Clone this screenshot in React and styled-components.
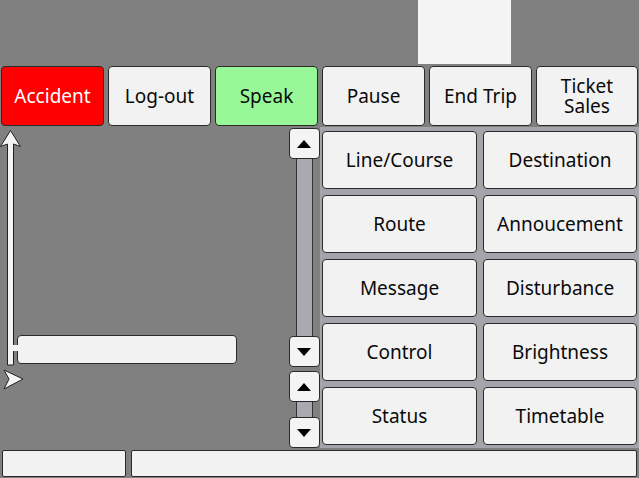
import React from "react";
import styled, { createGlobalStyle } from "styled-components";

const Global = createGlobalStyle`
  html, body { margin: 0; padding: 0; background: #808080; }
  body { font-family: "Noto Sans", "Open Sans", sans-serif; }
  * { box-sizing: border-box; }
`;

const Screen = styled.div`
  width: 639px;
  height: 478px;
  background: #808080;
  display: flex;
  flex-direction: column;
  overflow: hidden;
`;

const TopStrip = styled.div`
  height: 66px;
  display: flex;
  padding-left: 418px;
`;

const Indicator = styled.div`
  width: 93px;
  height: 64px;
  background: #f4f4f4;
`;

const Toolbar = styled.div`
  height: 60px;
  display: flex;
  gap: 4px;
  padding-left: 1px;
`;

const Btn = styled.button`
  flex: 0 0 ${(p) => p.$w || 103}px;
  height: 100%;
  border: 1px solid #2a2a2a;
  border-radius: 4px;
  background: ${(p) => p.$bg || "#f2f2f2"};
  color: ${(p) => p.$fg || "#0a0a0a"};
  font-family: "Noto Sans", sans-serif;
  font-size: 19px;
  line-height: 20px;
  padding: 0;
  display: flex;
  align-items: center;
  justify-content: center;
  text-align: center;
  white-space: pre-line;
`;

const Main = styled.div`
  flex: 1;
  display: flex;
  margin-top: 1px;
  min-height: 0;
`;

const Canvas = styled.div`
  position: relative;
  width: 288px;
  display: flex;
  flex-direction: column;
  padding: 208px 0 0 17px;
`;

const AxisArt = styled.svg`
  position: absolute;
  left: 0;
  top: 0;
`;

const Field = styled.div`
  width: 220px;
  height: 29px;
  background: #f2f2f2;
  border: 1px solid #2a2a2a;
  border-radius: 4px;
`;

const ScrollCol = styled.div`
  width: 32px;
  display: flex;
  flex-direction: column;
  align-items: center;
  padding-top: 1px;
  gap: 4px;
`;

const Scroller = styled.div`
  display: flex;
  flex-direction: column;
  align-items: center;
  height: ${(p) => p.$h}px;
`;

const Track = styled.div`
  flex: 1;
  width: 17px;
  background: #a9a9b0;
  border-left: 1px solid #333;
  border-right: 1px solid #333;
`;

const Arrow = styled.button`
  width: 31px;
  height: 31px;
  flex: 0 0 31px;
  padding: 0;
  background: #f4f4f4;
  border: 1px solid #2a2a2a;
  border-radius: 4px;
  display: flex;
  align-items: center;
  justify-content: center;
`;

const Grid = styled.div`
  flex: 1;
  background: #a4a4ab;
  display: grid;
  grid-template-columns: 155px 154px;
  grid-auto-rows: 58px;
  column-gap: 6px;
  row-gap: 6px;
  padding: 4px 2px 3px 2px;
`;

const GridBtn = styled(Btn)`
  height: 58px;
`;

const Bottom = styled.div`
  height: 30px;
  display: flex;
  gap: 5px;
  padding: 2px 2px 1px 2px;
`;

const Cell = styled.div`
  width: ${(p) => p.$w}px;
  height: 27px;
  background: #f2f2f2;
  border: 1px solid #2a2a2a;
  border-radius: 2px;
`;

const Tri = ({ up }) => (
  <svg width="16" height="10" viewBox="0 0 16 10">
    <polygon points={up ? "1,9 8,1 15,9" : "1,1 8,9 15,1"} fill="#000" />
  </svg>
);

const Axes = () => (
  <AxisArt width="40" height="280" viewBox="0 0 40 280">
    <path
      d="M7.5 17 L7.5 238 L13.5 238 L13.5 17 L20.5 19.5 L10.5 3.5 L0.5 19.5 Z"
      fill="#f4f4f4"
      stroke="#222"
      strokeWidth="1"
      strokeLinejoin="round"
    />
    <rect x="13" y="218" width="5" height="6" fill="#f4f4f4" />
    <path
      d="M4 243 L23 252 L4 262 L9 252 Z"
      fill="#f4f4f4"
      stroke="#222"
      strokeWidth="1"
      strokeLinejoin="round"
    />
  </AxisArt>
);

const topButtons = [
  { t: "Accident", bg: "#ff0000", fg: "#ffffff" },
  { t: "Log-out" },
  { t: "Speak", bg: "#98f898" },
  { t: "Pause" },
  { t: "End Trip" },
  { t: "Ticket\nSales", w: 102 },
];

const gridButtons = [
  "Line/Course",
  "Destination",
  "Route",
  "Annoucement",
  "Message",
  "Disturbance",
  "Control",
  "Brightness",
  "Status",
  "Timetable",
];

export default function App() {
  return (
    <>
      <Global />
      <Screen>
        <TopStrip>
          <Indicator />
        </TopStrip>
        <Toolbar>
          {topButtons.map((b) => (
            <Btn key={b.t} $bg={b.bg} $fg={b.fg} $w={b.w}>
              {b.t}
            </Btn>
          ))}
        </Toolbar>
        <Main>
          <Canvas>
            <Axes />
            <Field />
          </Canvas>
          <ScrollCol>
            <Scroller $h={239}>
              <Arrow><Tri up /></Arrow>
              <Track />
              <Arrow><Tri /></Arrow>
            </Scroller>
            <Scroller $h={77}>
              <Arrow><Tri up /></Arrow>
              <Track />
              <Arrow><Tri /></Arrow>
            </Scroller>
          </ScrollCol>
          <Grid>
            {gridButtons.map((t) => (
              <GridBtn key={t}>{t}</GridBtn>
            ))}
          </Grid>
        </Main>
        <Bottom>
          <Cell $w={124} />
          <Cell $w={507} />
        </Bottom>
      </Screen>
    </>
  );
}
